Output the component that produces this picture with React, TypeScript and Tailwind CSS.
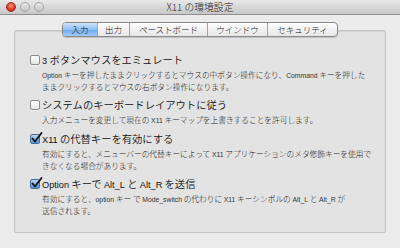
import React from "react";

const JP = { fontFamily: '"Noto Sans CJK JP", "Noto Sans", sans-serif' };
const LAT = { fontFamily: '"Liberation Sans", "Noto Sans CJK JP", sans-serif' };

function Mixed({ text, latin }: { text: string; latin: string }) {
  const parts = text.split(/([A-Za-z0-9_][A-Za-z0-9_ ]*[A-Za-z0-9_]|[A-Za-z0-9_])/);
  return (
    <>
      {parts.map((p, i) =>
        i % 2 === 1 ? (
          <span key={i} className={latin} style={LAT}>
            {p}
          </span>
        ) : (
          <React.Fragment key={i}>{p}</React.Fragment>
        )
      )}
    </>
  );
}

function Light({ red }: { red?: boolean }) {
  return red ? (
    <div className="w-[10px] h-[10px] rounded-full border border-[#9c2a22] bg-[radial-gradient(circle_at_50%_35%,#ff9a8c_0%,#e8392b_55%,#b81d12_100%)]" />
  ) : (
    <div className="w-[10px] h-[10px] rounded-full border border-[#a3a3a3] bg-[linear-gradient(#e9e9e9,#c4c4c4)]" />
  );
}

function Checkbox({ checked }: { checked?: boolean }) {
  if (!checked)
    return (
      <div className="w-[10px] h-[10px] shrink-0 rounded-[2px] border border-[#8c8c8c] bg-[linear-gradient(#ffffff,#e4e4e4)] shadow-[0_1px_0_rgba(255,255,255,0.6)]" />
    );
  return (
    <div className="relative w-[10px] h-[10px] shrink-0 rounded-[2px] border border-[#4b6d9a] bg-[linear-gradient(#b9d6f5,#4e94e6)]">
      <svg className="absolute left-[0px] top-[-3px]" width="12" height="12" viewBox="0 0 12 12">
        <path d="M1.5 6.5 L4 9.5 L10.5 1" fill="none" stroke="#111" strokeWidth="1.8" strokeLinecap="round" strokeLinejoin="round" />
      </svg>
    </div>
  );
}

function Option({ label, desc, checked }: { label: string; desc: string[]; checked?: boolean }) {
  return (
    <div className="flex flex-col">
      <div className="flex items-center gap-[2px] h-[12px]">
        <Checkbox checked={checked} />
        <span className="text-[10.3px] leading-[12px] font-[350] text-[#111] whitespace-nowrap">
          <Mixed text={label} latin="text-[9.2px] font-normal" />
        </span>
      </div>
      <div className="pl-[12px] mt-[3px] flex flex-col">
        {desc.map((d, i) => (
          <div key={i} className="text-[7.7px] leading-[11px] font-light text-[#1a1a1a] whitespace-nowrap">
            <Mixed text={d} latin="text-[6.8px] font-normal text-[#333]" />
          </div>
        ))}
      </div>
    </div>
  );
}

export default function App() {
  const tabs = [
    { t: "入力", w: "w-[34px]" },
    { t: "出力", w: "w-[32px]" },
    { t: "ペーストボード", w: "w-[78px]" },
    { t: "ウインドウ", w: "w-[60px]" },
    { t: "セキュリティ", w: "w-[70px]" },
  ];
  return (
    <div className="w-[400px] h-[248px] bg-[#ececec] flex flex-col overflow-hidden" style={JP}>
      <div className="h-[15px] shrink-0 border-b border-[#8e8e8e] bg-[linear-gradient(#e8e8e8,#c8c8c8)] flex items-center relative">
        <div className="flex items-center gap-[4px] pl-[6px]">
          <Light red />
          <Light />
          <Light />
        </div>
        <div className="absolute inset-0 flex items-center justify-center text-[9.8px] font-light text-[#222]">
          X11 の環境設定
        </div>
      </div>
      <div className="flex flex-col pt-[7px] px-[14px]">
        <div className="flex justify-center relative z-10">
          <div className="flex h-[15px] rounded-[4px] border border-[#8a8a8a] bg-[linear-gradient(#ffffff,#e6e6e6)] overflow-hidden shadow-[0_1px_1px_rgba(0,0,0,0.15)]">
            {tabs.map((tab, i) => (
              <div
                key={i}
                className={`${tab.w} flex items-center justify-center text-[8.5px] leading-none font-light text-[#111] ${
                  i > 0 ? "border-l border-[#a5a5a5]" : ""
                } ${i === 0 ? "bg-[linear-gradient(#cfe4fb,#8ec0f3_50%,#6eaaee_51%,#9fcbf6)]" : ""}`}
              >
                {tab.t}
              </div>
            ))}
          </div>
        </div>
        <div className="-mt-[7px] h-[203px] border border-[#c3c3c3] rounded-[2px] bg-[#e3e3e3] shadow-[inset_0_1px_1px_rgba(0,0,0,0.08)] pt-[23px] pl-[15px] flex flex-col gap-[7px]">
          <Option
            label="3 ボタンマウスをエミュレート"
            desc={[
              "Option キーを押したままクリックするとマウスの中ボタン操作になり、Command キーを押した",
              "ままクリックするとマウスの右ボタン操作になります。",
            ]}
          />
          <Option
            label="システムのキーボードレイアウトに従う"
            desc={["入力メニューを変更して現在の X11 キーマップを上書きすることを許可します。"]}
          />
          <Option
            checked
            label="X11 の代替キーを有効にする"
            desc={[
              "有効にすると、メニューバーの代替キーによって X11 アプリケーションのメタ修飾キーを使用で",
              "きなくなる場合があります。",
            ]}
          />
          <Option
            checked
            label="Option キーで Alt_L と Alt_R を送信"
            desc={[
              "有効にすると、option キー で Mode_switch の代わりに X11 キーシンボルの Alt_L と Alt_R が",
              "送信されます。",
            ]}
          />
        </div>
      </div>
    </div>
  );
}
